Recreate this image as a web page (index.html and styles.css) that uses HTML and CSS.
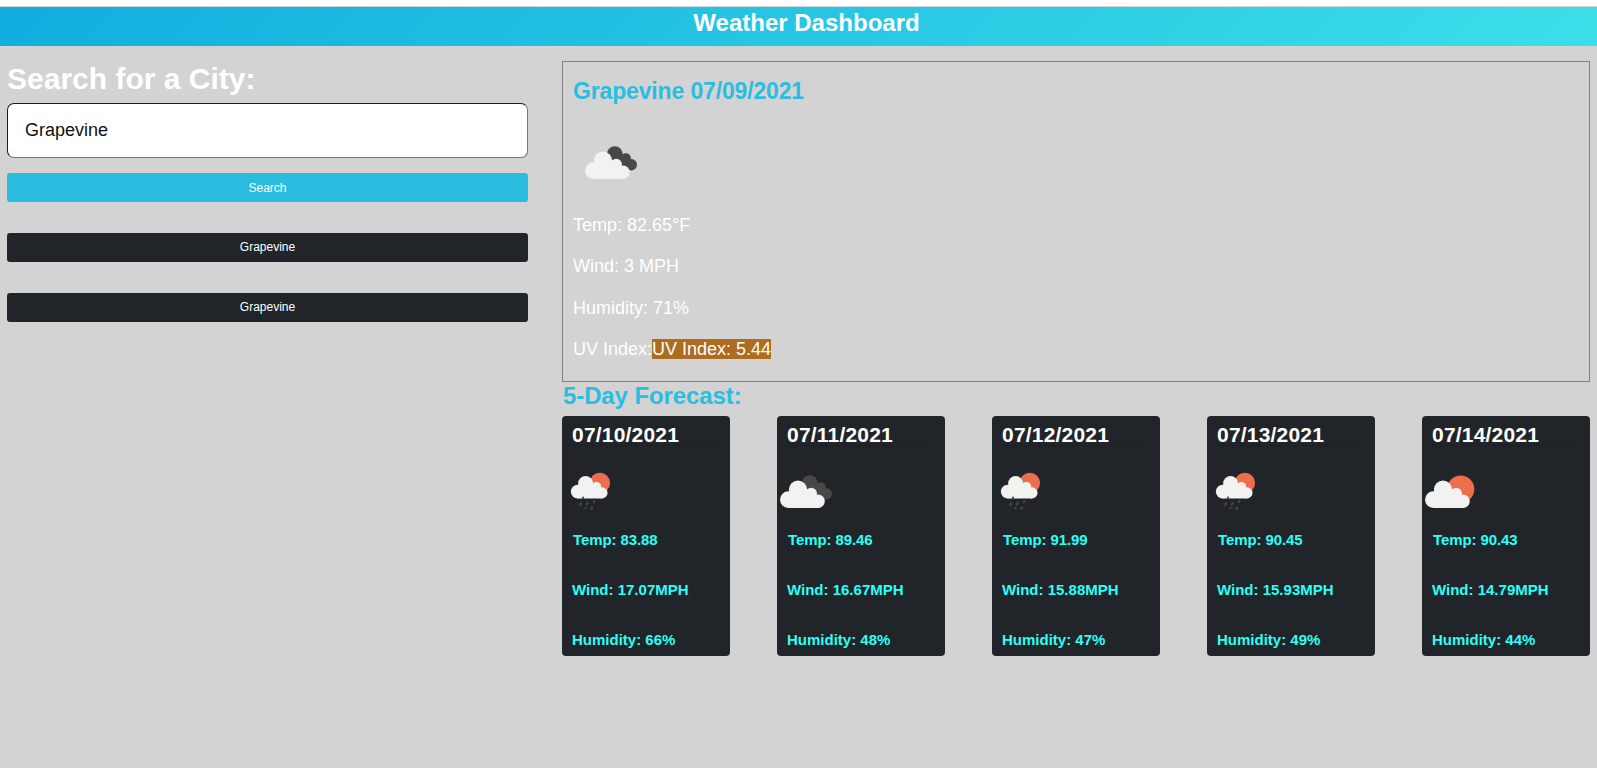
FILE: index.html
```html
<!DOCTYPE html>
<html lang="en">
<head>
<meta charset="utf-8">
<title>Weather Dashboard</title>
<link rel="stylesheet" href="styles.css">
</head>
<body>
<svg class="defs" aria-hidden="true">
  <symbol id="cloud" viewBox="14 14 55 36">
    <g fill="#f2f2f0"><circle cx="23.4" cy="40.6" r="8.4"/><circle cx="33" cy="30.6" r="9.1"/><circle cx="46.2" cy="34.6" r="5.8"/><circle cx="53" cy="42.2" r="6.8"/><path d="M23.3 49V33l9-5 9 2 5 3 6.5 4 .4 12z"/></g>
  </symbol>
  <symbol id="broken" viewBox="14 14 55 36">
    <g fill="#484848"><circle cx="44.8" cy="24.1" r="7.8"/><circle cx="56" cy="28.1" r="4.9"/><circle cx="61.3" cy="34.7" r="5.7"/><path d="M46 23h6l9 8-1 9.2-8-1-9-8z"/></g>
    <use href="#cloud" x="14" y="14" width="55" height="36"/>
  </symbol>
  <symbol id="partly" viewBox="14 14 55 36">
    <circle cx="50.7" cy="30.2" r="13.6" fill="#ec6e4c"/>
    <use href="#cloud" x="14" y="14" width="55" height="36"/>
  </symbol>
  <symbol id="rain" viewBox="10 12 42 40">
    <circle cx="39.8" cy="23" r="10.3" fill="#ec6e4c"/>
    <use href="#cloud" x="10" y="9.8" width="45.1" height="29.5"/>
    <path d="M23.1 37.4v.6M21 43.4l-.7 1.6M27.6 42.9l-.9 1.7M34.4 41.2l-.4.9M25.6 48l-.1.3M32.2 47.6l-.7 1.2" fill="none" stroke="#484a4c" stroke-width="2" stroke-linecap="round"/>
  </symbol>
</svg>
<header class="header"><h1 class="title">Weather Dashboard</h1></header>
<main class="main">
  <aside class="side">
    <h2 class="side-title">Search for a City:</h2>
    <input class="city" type="text" value="Grapevine">
    <button class="btn search">Search</button>
    <div class="history">
      <button class="btn dark">Grapevine</button>
      <button class="btn dark">Grapevine</button>
    </div>
  </aside>
  <section class="content">
    <div class="today">
      <h2 class="heading city-title">Grapevine 07/09/2021</h2>
      <svg class="today-icon" width="55" height="36"><use href="#broken"/></svg>
      <p class="stat">Temp: 82.65°F</p>
      <p class="stat">Wind: 3 MPH</p>
      <p class="stat">Humidity: 71%</p>
      <p class="stat">UV Index:<span class="uv">UV Index: 5.44</span></p>
    </div>
    <h2 class="heading forecast-title">5-Day Forecast:</h2>
    <div class="cards">
      <article class="card"><h3 class="date">07/10/2021</h3><div class="icon icon-rain"><svg width="42" height="40"><use href="#rain"/></svg></div><p class="fact temp">Temp: 83.88</p><p class="fact">Wind: 17.07MPH</p><p class="fact">Humidity: 66%</p></article>
      <article class="card"><h3 class="date">07/11/2021</h3><div class="icon"><svg width="55" height="36"><use href="#broken"/></svg></div><p class="fact temp">Temp: 89.46</p><p class="fact">Wind: 16.67MPH</p><p class="fact">Humidity: 48%</p></article>
      <article class="card"><h3 class="date">07/12/2021</h3><div class="icon icon-rain"><svg width="42" height="40"><use href="#rain"/></svg></div><p class="fact temp">Temp: 91.99</p><p class="fact">Wind: 15.88MPH</p><p class="fact">Humidity: 47%</p></article>
      <article class="card"><h3 class="date">07/13/2021</h3><div class="icon icon-rain"><svg width="42" height="40"><use href="#rain"/></svg></div><p class="fact temp">Temp: 90.45</p><p class="fact">Wind: 15.93MPH</p><p class="fact">Humidity: 49%</p></article>
      <article class="card"><h3 class="date">07/14/2021</h3><div class="icon"><svg width="55" height="36"><use href="#partly"/></svg></div><p class="fact temp">Temp: 90.43</p><p class="fact">Wind: 14.79MPH</p><p class="fact">Humidity: 44%</p></article>
    </div>
  </section>
</main>
</body>
</html>
```
FILE: styles.css
```css
* { box-sizing: border-box; }
html { background: #d3d3d3; }
body {
  margin: 0;
  border-top: 6px solid #fff;
  padding-top: 1px;
  font-family: Arial, "Liberation Sans", sans-serif;
  color: #fff;
}
h1, h2, h3, p { margin: 0; }
.defs { position: absolute; width: 0; height: 0; }
.header {
  height: 39px;
  padding-left: 16px;
  background: linear-gradient(135deg, #11addf, #3bdfe8);
  text-align: center;
}
.title { font-size: 24px; line-height: 31px; }
.main { display: flex; gap: 34px; padding: 15px 7px 0; }
.side { width: 521px; display: flex; flex-direction: column; }
.side-title { font-size: 30px; line-height: 36px; margin-bottom: 6px; }
.city {
  height: 55px;
  padding: 0 17px;
  border: 1px solid;
  border-color: #1c1c1e #767676 #767676 #1c1c1e;
  border-radius: 7px;
  background: #fff;
  color: #111;
  font: 18px Arial, "Liberation Sans", sans-serif;
}
.btn {
  height: 29px;
  border: 0;
  border-radius: 3px;
  padding: 0;
  color: #fff;
  font: 12px Arial, "Liberation Sans", sans-serif;
}
.search { margin: 15px 0 31px; background: #2bbddf; }
.history { display: flex; flex-direction: column; gap: 31px; }
.dark { background: #212529; padding-bottom: 2px; }
.content { flex: 1; }
.today {
  height: 321px;
  border: 1px solid #808080;
  padding: 15px 10px 0;
}
.heading { color: #2bbddf; font-size: 24px; line-height: 29px; }
.city-title { font-size: 23px; letter-spacing: -0.15px; }
.today-icon { display: block; margin: 38px 0 35px 11px; }
.stat { font-size: 18px; line-height: 20px; margin-bottom: 21.4px; }
.uv { background: #ad6c1f; }
.forecast-title { height: 34px; padding-left: 1px; line-height: 27px; letter-spacing: -0.1px; }
.cards { display: flex; justify-content: space-between; }
.card {
  width: 168px;
  height: 240px;
  border-radius: 4px;
  background: #212529;
}
.date {
  height: 30px;
  margin: 0 10px;
  padding-top: 7px;
  border-bottom: 1px solid #1c2024;
  font-size: 21px;
  line-height: 24px;
  letter-spacing: 0.2px;
}
.icon { height: 84px; padding: 27px 0 0 2px; }
.icon-rain { padding: 26px 0 0 8px; }
.icon svg { display: block; }
.fact {
  color: #2bfff6;
  font-size: 15px;
  font-weight: bold;
  line-height: 20px;
  margin: 0 0 30px 10px;
}
.temp { padding-left: 1px; letter-spacing: -0.1px; }
```
